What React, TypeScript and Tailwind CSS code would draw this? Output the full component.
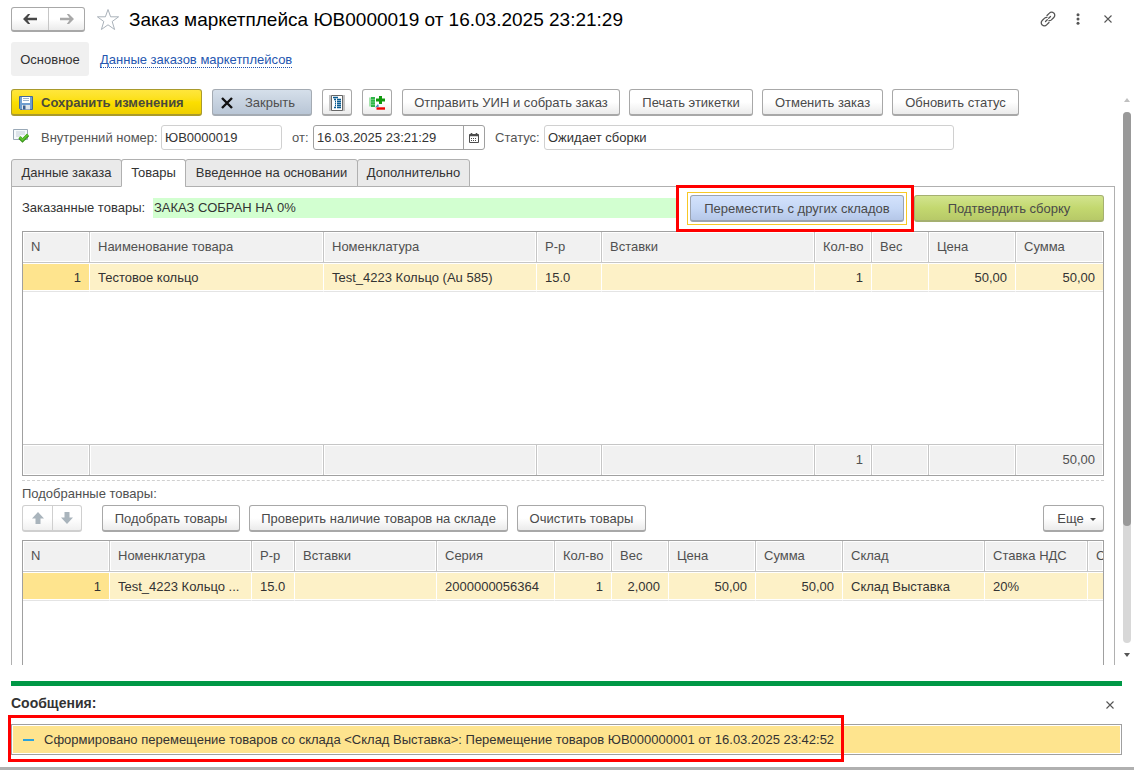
import clsx from 'clsx';
import type { ButtonHTMLAttributes, ReactNode } from 'react';

interface Column {
    title: string;
    width?: string;
    align?: 'right';
}

interface GridProps {
    columns: Column[];
    row: string[];
    footer?: string[];
    label: string;
}

const ORDERED: Column[] = [
    { title: 'N', width: 'w-[67px]', align: 'right' },
    { title: 'Наименование товара', width: 'w-[234px]' },
    { title: 'Номенклатура', width: 'w-[213px]' },
    { title: 'Р-р', width: 'w-[65px]' },
    { title: 'Вставки' },
    { title: 'Кол-во', width: 'w-[57px]', align: 'right' },
    { title: 'Вес', width: 'w-[57px]', align: 'right' },
    { title: 'Цена', width: 'w-[87px]', align: 'right' },
    { title: 'Сумма', width: 'w-[87px]', align: 'right' },
];

const PICKED: Column[] = [
    { title: 'N', width: 'w-[87px]', align: 'right' },
    { title: 'Номенклатура', width: 'w-[142px]' },
    { title: 'Р-р', width: 'w-[43px]' },
    { title: 'Вставки', width: 'w-[142px]' },
    { title: 'Серия', width: 'w-[118px]' },
    { title: 'Кол-во', width: 'w-[57px]', align: 'right' },
    { title: 'Вес', width: 'w-[57px]', align: 'right' },
    { title: 'Цена', width: 'w-[87px]', align: 'right' },
    { title: 'Сумма', width: 'w-[87px]', align: 'right' },
    { title: 'Склад', width: 'w-[142px]' },
    { title: 'Ставка НДС', width: 'w-[103px]' },
    { title: 'С' },
];

const TONES = {
    plain: 'justify-center bg-linear-to-b from-white from-50% to-[#ebebeb] border-[#a8a8a8] text-[#4a4a4a]',
    yellow: 'bg-linear-to-b from-[#ffe63b] via-[#fcdf00] to-[#efcf00] border-[#a99a2c] text-[#4a4a3c] font-bold',
    steel: 'bg-linear-to-b from-[#d5dfea] to-[#b9c6d6] border-[#a4abb3] text-[#4f4f4f]',
    blue: 'justify-center bg-linear-to-b from-[#d3e2fc] via-[#c6d8f6] to-[#b5c7e8] border-[#9ba3b0] text-[#4a4a4a]',
    green: 'justify-center bg-linear-to-b from-[#d2e48e] via-[#c3d86f] to-[#b7c968] border-[#a5b070] text-[#4a4a4a]',
};

interface PushProps extends ButtonHTMLAttributes<HTMLButtonElement> {
    tone?: keyof typeof TONES;
}

function Push({ tone = 'plain', className, ...rest }: PushProps) {
    return (
        <button
            type="button"
            className={clsx(
                'flex h-[27px] shrink-0 items-center rounded-[3px] border border-b-2 pt-[2px] whitespace-nowrap',
                TONES[tone],
                className,
            )}
            {...rest}
        />
    );
}

function Grid({ columns, row, footer, label }: GridProps) {
    return (
        <table aria-label={label} className="h-full w-full table-fixed border-separate border-spacing-0">
            <colgroup>
                {columns.map((c) => (
                    <col key={c.title} className={c.width} />
                ))}
            </colgroup>
            <thead>
                <tr className="h-[31px] text-[#505050]">
                    {columns.map((c) => (
                        <th
                            key={c.title}
                            className="overflow-hidden border-r border-b border-[#c6c6c6] bg-[#f1f1f1] px-2 text-left font-normal whitespace-nowrap shadow-[inset_0_0_0_1px_white] last:border-r-0"
                        >
                            {c.title}
                        </th>
                    ))}
                </tr>
            </thead>
            <tbody>
                <tr className="h-[29px]">
                    {columns.map((c, i) => (
                        <td
                            key={c.title}
                            className={clsx(
                                'border-r border-b border-r-white border-b-[#e4e4e4] px-2 pt-[2px] whitespace-nowrap shadow-[inset_0_1px_white,inset_0_-1px_white] last:border-r-0',
                                i === 0 ? 'bg-[#fee48e]' : 'bg-[#fdf1c7]',
                                c.align === 'right' && 'text-right',
                            )}
                        >
                            {row[i]}
                        </td>
                    ))}
                </tr>
                <tr>
                    <td colSpan={columns.length} />
                </tr>
            </tbody>
            {footer && (
                <tfoot>
                    <tr className="h-[31px] text-[#505050]">
                        {columns.map((c, i) => (
                            <td
                                key={c.title}
                                className="border-t border-r border-[#c6c6c6] bg-[#f1f1f1] px-2 text-right shadow-[inset_0_0_0_1px_white] last:border-r-0"
                            >
                                {footer[i]}
                            </td>
                        ))}
                    </tr>
                </tfoot>
            )}
        </table>
    );
}

function Arrow({ className }: { className: string }) {
    return (
        <svg viewBox="0 0 14 10" className={clsx('h-[10px] w-[14px]', className)} aria-hidden="true">
            <path d="M0 5 5 0h2.200L4.500 3.800H14v2.400H4.500L7.200 10H5Z" fill="currentColor" />
        </svg>
    );
}

function BlockArrow({ className }: { className?: string }) {
    return (
        <svg viewBox="0 0 12 12" className={clsx('size-3 text-[#a9b4bc]', className)} aria-hidden="true">
            <path d="M6 0 12 6.5H8.5V12h-5V6.5H0Z" fill="currentColor" />
        </svg>
    );
}

function Cross({ className }: { className?: string }) {
    return (
        <svg viewBox="0 0 8 8" className={clsx('size-2', className)} aria-hidden="true">
            <path d="M.5.5l7 7M7.5.5l-7 7" stroke="#555" strokeWidth="1.1" />
        </svg>
    );
}

function FloppyIcon() {
    return (
        <svg viewBox="0 0 14 14" className="size-[14px]" aria-hidden="true">
            <path d="M.5.5h13v13h-12l-1-1Z" fill="#6f9ed0" stroke="#44699c" />
            <path d="M3 1h8v6H3Z" fill="#fff" />
            <path d="M4 2.5h6M4 4.5h6" stroke="#9db4cc" />
            <path d="M3 9h8v4.5H3Z" fill="#dfe5ea" />
            <path d="M4 9.5h2.5v4H4Z" fill="#3d5f8c" />
        </svg>
    );
}

function ReportIcon() {
    return (
        <svg viewBox="0 0 16 16" className="size-4" aria-hidden="true">
            <path d="M0 0h16v16H0Z" fill="#c4c4c4" />
            <path d="M2.5.5h11v15h-11Z" fill="#fff" stroke="#666" />
            <path
                d="M4 2.5h5M5 4.5h2M8 4.5h4M6 6.5h1M8 6.5h4M6 8.5h1M8 8.5h4M6 10.5h1M8 10.5h4M5 12.5h2M8 12.5h4"
                stroke="#0a5c92"
                strokeWidth="1.4"
            />
        </svg>
    );
}

function StockIcon() {
    return (
        <svg viewBox="0 0 16 14" className="h-[14px] w-4" aria-hidden="true">
            <path d="M0 1.5h2v9H0Z" fill="#a5e3ac" />
            <path d="M2 1h4v10H2Z" fill="#2fb648" />
            <path d="M2 3.5h4M2 6h4M2 8.5h4" stroke="#8fdc9a" strokeWidth=".6" />
            <path d="M11.500 0v8M7 4h9" stroke="#12990f" strokeWidth="3" />
            <path d="M6 11.5 9 8l1 2.5Z" fill="#3f82bd" />
            <path d="M7.5 12.5H16" stroke="#f00000" strokeWidth="2.4" />
        </svg>
    );
}

function PostedIcon() {
    return (
        <svg viewBox="0 0 16 14" className="h-[14px] w-4" aria-hidden="true">
            <path d="M.5.5h14v10H.5Z" fill="#f6f9fb" stroke="#9aa9b7" />
            <path d="M3 3h9M3 5h9M3 7h4" stroke="#c3ced8" />
            <path d="M6.5 8.500 9.500 11.500 15 6" fill="none" stroke="#2f8a12" strokeWidth="3.200" />
            <path d="M6.500 8 9.500 11 15 5.500" fill="none" stroke="#5cc22f" strokeWidth="2" />
        </svg>
    );
}

function CalendarIcon() {
    return (
        <svg viewBox="0 0 10 10" className="size-[10px]" aria-hidden="true">
            <path d="M.5 1.5h9v8h-9Z" fill="#fff" stroke="#4d4d4d" />
            <path d="M0 2.5h10M2.5 0v2M7.5 0v2" stroke="#4d4d4d" strokeWidth="1.6" />
            <path d="M2 5.5h6M2 7.5h6" stroke="#4d4d4d" strokeDasharray="1 1" />
        </svg>
    );
}

function Tab({ active, className, children }: { active?: boolean; className: string; children: ReactNode }) {
    return (
        <button
            type="button"
            role="tab"
            aria-selected={!!active}
            className={clsx(
                '-ml-px h-7 rounded-t-[3px] border border-[#b0b0b0] text-center whitespace-nowrap first:ml-0',
                active ? 'border-b-white bg-white' : 'bg-[#eaeaea]',
                className,
            )}
        >
            {children}
        </button>
    );
}

export default function App() {
    return (
        <div className="flex h-screen flex-col overflow-hidden bg-white font-['Liberation_Sans',Arial,sans-serif] text-[13px] leading-4 text-[#333]">
            <header className="flex h-[39px] shrink-0 items-center pr-[22px] pl-[11px]">
                <div className="flex h-[25px] rounded-[3px] border border-b-2 border-[#a8a8a8] bg-linear-to-b from-white from-50% to-[#ebebeb]">
                    <button type="button" aria-label="Назад" className="flex w-[37px] items-center justify-center border-r border-[#c6c6c6]">
                        <Arrow className="text-[#484848]" />
                    </button>
                    <button type="button" aria-label="Вперед" className="flex w-[35px] items-center justify-center">
                        <Arrow className="rotate-180 text-[#a8a8a8]" />
                    </button>
                </div>
                <button type="button" aria-label="В избранное" className="ml-[11px]">
                    <svg viewBox="0 0 24 23" className="h-[23px] w-6" aria-hidden="true">
                        <path
                            d="M12 1.5l2.6 7.3h8l-6.4 4.7 2.4 8L12 16.8l-6.6 4.7 2.4-8L1.4 8.8h8Z"
                            fill="#fff"
                            stroke="#aab2ba"
                        />
                    </svg>
                </button>
                <h1 className="ml-[9px] text-[19px] leading-6 text-black">Заказ маркетплейса ЮВ0000019 от 16.03.2025 23:21:29</h1>
                <div className="ml-auto flex items-center pb-[2px]">
                    <button type="button" aria-label="Ссылка">
                        <svg viewBox="0 0 16 16" className="size-4" aria-hidden="true">
                            <g fill="none" stroke="#555" strokeWidth="1.3" strokeLinecap="round">
                                <path d="M7 4.500 9.400 2.100a3 3 0 0 1 4.400 0a3 3 0 0 1 0 4.400L11.400 8.900a3 3 0 0 1-2.400.8" />
                                <path d="M9 11.500 6.600 13.900a3 3 0 0 1-4.400 0a3 3 0 0 1 0-4.400L4.600 7.100a3 3 0 0 1 2.400-.8" />
                                <path d="M5.500 10.500l1.800-1.800M8.700 7.300l1.800-1.800" />
                            </g>
                        </svg>
                    </button>
                    <button type="button" aria-label="Меню" className="ml-5">
                        <svg viewBox="0 0 4 12" className="h-3 w-1" aria-hidden="true">
                            <circle cx="2" cy="1.800" r="1.500" fill="#555" />
                            <circle cx="2" cy="6" r="1.500" fill="#555" />
                            <circle cx="2" cy="10.200" r="1.500" fill="#555" />
                        </svg>
                    </button>
                    <button type="button" aria-label="Закрыть окно" className="ml-6">
                        <Cross />
                    </button>
                </div>
            </header>

            <nav className="mt-[3px] flex h-[34px] shrink-0 items-center gap-[11px] pl-[11px]">
                <span className="flex h-full w-[78px] items-center justify-center rounded-[3px] bg-[#f0f0f0] pt-[2px]">Основное</span>
                <a href="#orders" className="mt-[2px] border-b border-dotted border-[#2456b0] leading-[14px] text-[#2456b0]">
                    Данные заказов маркетплейсов
                </a>
            </nav>

            <div className="mt-[13px] flex min-h-0 flex-1">
                <main className="min-w-0 flex-1 overflow-hidden pr-[7px] pl-[11px]">
                    <div className="flex gap-[10px]">
                        <Push tone="yellow" className="w-[191px] gap-2 pl-[7px]">
                            <FloppyIcon />
                            Сохранить изменения
                        </Push>
                        <Push tone="steel" className="w-[100px] gap-3 pl-2">
                            <svg viewBox="0 0 12 12" className="size-3" aria-hidden="true">
                                <path d="M1 1l10 10M11 1 1 11" stroke="#111" strokeWidth="2.400" />
                            </svg>
                            Закрыть
                        </Push>
                        <Push aria-label="Отчет" className="w-[30px]">
                            <ReportIcon />
                        </Push>
                        <Push aria-label="Остатки" className="w-[30px]">
                            <StockIcon />
                        </Push>
                        <div className="flex gap-[9px]">
                            <Push className="w-[218px]">Отправить УИН и собрать заказ</Push>
                            <Push className="w-[124px]">Печать этикетки</Push>
                            <Push className="w-[121px]">Отменить заказ</Push>
                            <Push className="w-[127px]">Обновить статус</Push>
                        </div>
                    </div>

                    <div className="mt-[9px] flex h-[25px] items-center text-[#555]">
                        <span className="ml-[2px] w-[28px] pb-1">
                            <PostedIcon />
                        </span>
                        <label htmlFor="number" className="w-[120px] whitespace-nowrap">
                            Внутренний номер:
                        </label>
                        <input
                            id="number"
                            defaultValue="ЮВ0000019"
                            className="h-[25px] w-[121px] rounded-[3px] border border-[#d0d0d0] px-[3px] text-[#333]"
                        />
                        <label htmlFor="date" className="ml-[10px] w-[21px]">
                            от:
                        </label>
                        <div className="flex h-[25px] w-[172px] rounded-[3px] border border-[#a0a0a0]">
                            <input id="date" defaultValue="16.03.2025 23:21:29" className="min-w-0 flex-1 px-[3px] text-[#333]" />
                            <button
                                type="button"
                                aria-label="Выбрать дату"
                                className="flex w-[21px] items-center justify-center border-l border-[#a0a0a0]"
                            >
                                <CalendarIcon />
                            </button>
                        </div>
                        <label htmlFor="status" className="ml-[10px] w-[49px]">
                            Статус:
                        </label>
                        <input
                            id="status"
                            defaultValue="Ожидает сборки"
                            className="h-[25px] w-[410px] rounded-[3px] border border-[#d0d0d0] px-[3px] text-[#333]"
                        />
                    </div>

                    <div role="tablist" className="relative mt-[9px] flex">
                        <Tab className="w-[111px]">Данные заказа</Tab>
                        <Tab active className="w-[65px]">
                            Товары
                        </Tab>
                        <Tab className="w-[173px]">Введенное на основании</Tab>
                        <Tab className="w-[113px]">Дополнительно</Tab>
                    </div>

                    <section className="-mt-px border border-[#b0b0b0] px-[10px] pb-4">
                        <div className="-mt-px flex h-[45px] items-center pb-px">
                            <span className="w-[131px]">Заказанные товары:</span>
                            <output className="h-5 flex-1 bg-[#d2ffd0] pl-px leading-5">ЗАКАЗ СОБРАН НА 0%</output>
                            <div className="relative -ml-1 border-[3px] border-[#ff0000] bg-white py-1 pr-1 pl-2">
                                <div className="border border-[#f8c825] p-[2px]">
                                    <Push tone="blue" className="w-[214px]">
                                        Переместить с других складов
                                    </Push>
                                </div>
                            </div>
                            <Push tone="green" className="w-[190px]">
                                Подтвердить сборку
                            </Push>
                        </div>

                        <div className="h-[245px] border border-[#a0a0a0]">
                            <Grid
                                label="Заказанные товары"
                                columns={ORDERED}
                                row={['1', 'Тестовое кольцо', 'Test_4223 Кольцо (Au 585)', '15.0', '', '1', '', '50,00', '50,00']}
                                footer={['', '', '', '', '', '1', '', '', '50,00']}
                            />
                        </div>

                        <div className="mt-1 border-t border-dashed border-[#d0d0d0]" />
                        <p className="mt-[5px] text-[#505050]">Подобранные товары:</p>

                        <div className="mt-[3px] flex gap-[9px]">
                            <div className="mr-[11px] flex h-[27px] rounded-[3px] border border-b-2 border-[#cfcfcf] bg-linear-to-b from-white from-50% to-[#f0f0f0]">
                                <button type="button" aria-label="Вверх" className="flex w-[30px] items-center justify-center border-r border-[#cfcfcf]">
                                    <BlockArrow />
                                </button>
                                <button type="button" aria-label="Вниз" className="flex w-[28px] items-center justify-center">
                                    <BlockArrow className="rotate-180" />
                                </button>
                            </div>
                            <Push className="w-[138px]">Подобрать товары</Push>
                            <Push className="w-[259px]">Проверить наличие товаров на складе</Push>
                            <Push className="w-[129px]">Очистить товары</Push>
                            <Push className="ml-auto w-[61px] gap-[6px] pl-[6px]">
                                Еще
                                <svg viewBox="0 0 6 3" className="h-[3px] w-[6px]" aria-hidden="true">
                                    <path d="M0 0h6L3 3Z" fill="#444" />
                                </svg>
                            </Push>
                        </div>

                        <div className="mt-2 h-[245px] border border-[#a0a0a0]">
                            <Grid
                                label="Подобранные товары"
                                columns={PICKED}
                                row={['1', 'Test_4223 Кольцо ...', '15.0', '', '2000000056364', '1', '2,000', '50,00', '50,00', 'Склад Выставка', '20%', '']}
                            />
                        </div>
                    </section>
                </main>

                <div className="flex w-[12px] shrink-0 flex-col items-center pt-[9px] pr-[2px] pb-2" aria-hidden="true">
                    <svg viewBox="0 0 6 4" className="h-1 w-[6px]">
                        <path d="M0 4h6L3 0Z" fill="#c0c0c0" />
                    </svg>
                    <div className="my-[10px] w-2 flex-1 rounded-full bg-[#d8d8d8]">
                        <div className="h-[78%] rounded-full bg-[#999]" />
                    </div>
                    <svg viewBox="0 0 6 4" className="h-1 w-[6px]">
                        <path d="M0 0h6L3 4Z" fill="#555" />
                    </svg>
                </div>
            </div>

            <footer className="mt-4 shrink-0 border-b-[3px] border-[#b0b0b0] pr-3 pb-3">
                <div className="ml-[11px] h-[5px] bg-[#009846]" />
                <div className="ml-[11px] flex h-[29px] items-center justify-between pt-2 pr-2">
                    <h2 className="pb-1 text-sm leading-4 font-bold">Сообщения:</h2>
                    <button type="button" aria-label="Закрыть сообщения">
                        <Cross />
                    </button>
                </div>
                <div className="relative mt-[9px] ml-[11px] flex h-[31px] items-center border border-[#a0a0a0] bg-[#fee48e] pl-[11px] shadow-[inset_0_0_0_1px_white]">
                    <span className="h-[2px] w-[11px] bg-[#2ba3dc]" />
                    <span className="ml-[10px]">
                        Сформировано перемещение товаров со склада &lt;Склад Выставка&gt;: Перемещение товаров ЮВ000000001 от 16.03.2025 23:42:52
                    </span>
                    <div className="pointer-events-none absolute -top-[10px] -left-1 h-[47px] w-[836px] border-[3px] border-[#ff0000]" />
                </div>
            </footer>
        </div>
    );
}
